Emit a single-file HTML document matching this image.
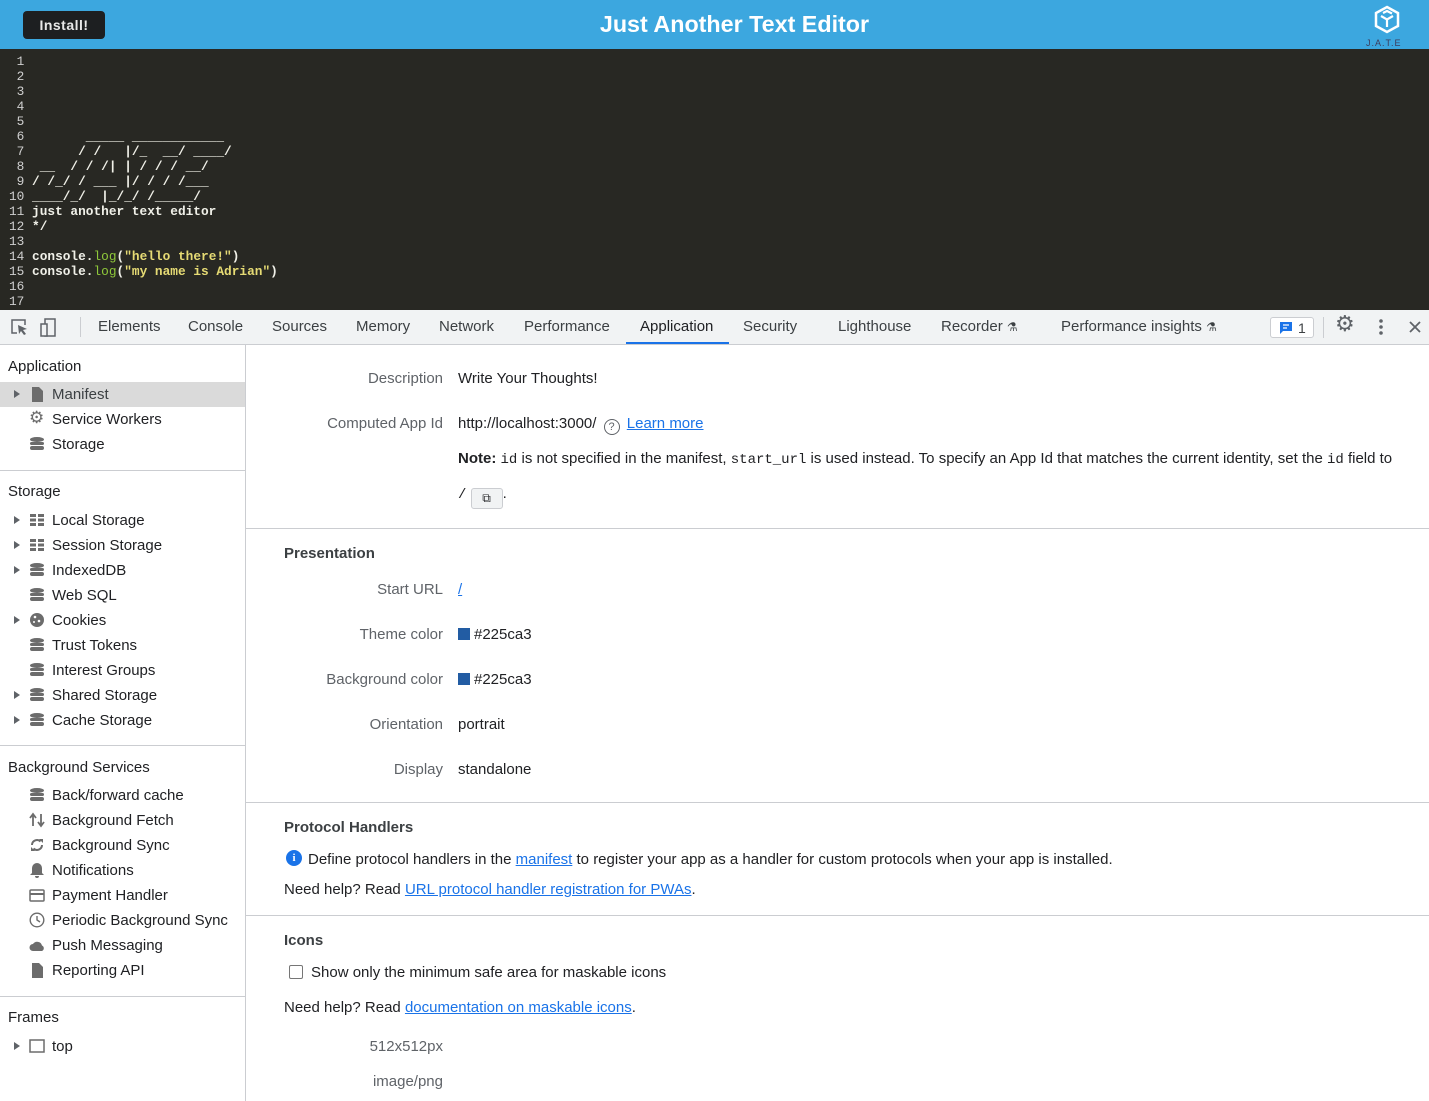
<!DOCTYPE html>
<html><head><meta charset="utf-8"><style>
*{margin:0;padding:0;box-sizing:border-box}
body{width:1429px;height:1101px;overflow:hidden;font-family:"Liberation Sans",sans-serif;background:#fff;position:relative;color:#202124;line-height:20px}
.a{position:absolute;white-space:nowrap}
#hdr{left:0;top:0;width:1429px;height:49px;background:#3ca7df}
#inst{left:23px;top:11px;width:82px;height:28px;background:#1d1f21;border-radius:4px;color:#e8e8e8;font-weight:bold;font-size:14px;line-height:28px;text-align:center;letter-spacing:.5px}
#title{left:0;width:1469px;top:10px;text-align:center;color:#fff;font-weight:bold;font-size:23.3px;line-height:28px}
#ed{left:0;top:49px;width:1429px;height:261px;background:#282823}
pre{position:absolute;left:9px;top:54px;font-family:"Liberation Mono",monospace;font-size:12.8px;line-height:15px;color:#f0f0e8;font-weight:bold}
.g{color:#8fc93a;font-weight:normal}.y{color:#e6db74}.n{color:#cfcfcf;font-weight:normal}
#tb{left:0;top:310px;width:1429px;height:35px;background:#f1f3f4;border-bottom:1px solid #cbcdd1}
.tab{top:317px;font-size:15px;color:#3c4043}
#side{left:0;top:345px;width:246px;height:756px;border-right:1px solid #cbcdd1}
.h{font-size:15px;color:#202124;left:8px}
.it{left:52px;font-size:15px;color:#202124}
.ic{left:29px;width:16px;height:16px}
.tri{left:14px;width:0;height:0;border-left:6px solid #5f6368;border-top:4px solid transparent;border-bottom:4px solid transparent}
.hr{height:1px;background:#cbcdd1}
.lb{font-size:15px;color:#5f6368;right:986px;text-align:right}
.v{left:458px;font-size:15px;color:#202124}
.sec{left:284px;font-size:15px;font-weight:bold;color:#3c4043}
a{color:#1a73e8}
code{font-family:"Liberation Mono",monospace;font-size:14px}
</style></head><body>
<div class="a" id="hdr"></div>
<div class="a" id="inst">Install!</div>
<div class="a" id="title">Just Another Text Editor</div>
<svg class="a" style="left:1373px;top:5px" width="28" height="30" viewBox="0 0 28 30"><path d="M14 2 L25 8 V21 L14 27 L3 21 V8 Z" fill="none" stroke="#fff" stroke-width="2.5"/><path d="M8 11 L14 14.5 L20 11 M14 14.5 V22 M10 8 L14 6 L19 8.5" fill="none" stroke="#fff" stroke-width="2.2"/></svg>
<div class="a" style="left:1366px;top:37px;font-size:9px;line-height:12px;color:#3d3d5c;letter-spacing:1px">J.A.T.E</div>
<div class="a" id="ed"></div>
<pre><span class="n"> 1</span>
<span class="n"> 2</span>
<span class="n"> 3</span>
<span class="n"> 4</span>
<span class="n"> 5</span>
<span class="n"> 6</span>        _____ ____________
<span class="n"> 7</span>       / /   |/_  __/ ____/
<span class="n"> 8</span>  __  / / /| | / / / __/
<span class="n"> 9</span> / /_/ / ___ |/ / / /___
<span class="n">10</span> ____/_/  |_/_/ /_____/
<span class="n">11</span> just another text editor
<span class="n">12</span> */
<span class="n">13</span>
<span class="n">14</span> console.<span class="g">log</span>(<span class="y">"hello there!"</span>)
<span class="n">15</span> console.<span class="g">log</span>(<span class="y">"my name is Adrian"</span>)
<span class="n">16</span>
<span class="n">17</span></pre>
<div class="a" id="tb"></div>
<svg class="a" style="left:10px;top:318px" width="54" height="20" viewBox="0 0 54 20"><path d="M7 15H2V2h13v5" fill="none" stroke="#5f6368" stroke-width="1.5"/><path d="M8 7l9 4-4 1 3 4-2 1-3-4-2 3z" fill="#5f6368"/><rect x="35" y="1" width="10" height="17" fill="none" stroke="#5f6368" stroke-width="1.5"/><rect x="31" y="6" width="6" height="12" fill="#f1f3f4" stroke="#5f6368" stroke-width="1.5"/></svg>
<div class="a" style="left:80px;top:317px;width:1px;height:20px;background:#cbcdd1"></div>
<div class="a tab" style="left:98px">Elements</div>
<div class="a tab" style="left:188px">Console</div>
<div class="a tab" style="left:272px">Sources</div>
<div class="a tab" style="left:356px">Memory</div>
<div class="a tab" style="left:439px">Network</div>
<div class="a tab" style="left:524px">Performance</div>
<div class="a tab" style="left:640px;color:#202124">Application</div>
<div class="a" style="left:626px;top:342px;width:103px;height:2px;background:#1a73e8"></div>
<div class="a tab" style="left:743px">Security</div>
<div class="a tab" style="left:838px">Lighthouse</div>
<div class="a tab" style="left:941px">Recorder <span style="font-size:12px">⚗</span></div>
<div class="a tab" style="left:1061px">Performance insights <span style="font-size:12px">⚗</span></div>
<div class="a" style="left:1270px;top:317px;width:44px;height:21px;border:1px solid #cbcdd1;border-radius:3px;background:#fff"></div>
<svg class="a" style="left:1278px;top:320px" width="16" height="16" viewBox="0 0 16 16"><path d="M2 2h12v9H5l-3 3z" fill="#1a73e8"/><path d="M5 5h6M5 8h4" stroke="#fff" stroke-width="1.3"/></svg>
<div class="a" style="left:1298px;top:318px;font-size:14px;color:#3c4043">1</div>
<div class="a" style="left:1323px;top:317px;width:1px;height:21px;background:#cbcdd1"></div>
<div class="a" style="left:1335px;top:314px;font-size:22px;color:#5f6368">⚙</div>
<svg class="a" style="left:1377px;top:318px" width="8" height="18"><circle cx="4" cy="3" r="1.8" fill="#5f6368"/><circle cx="4" cy="9" r="1.8" fill="#5f6368"/><circle cx="4" cy="15" r="1.8" fill="#5f6368"/></svg>
<svg class="a" style="left:1408px;top:320px" width="14" height="14"><path d="M2 2l10 10M12 2L2 12" stroke="#5f6368" stroke-width="1.8"/></svg>

<div class="a" id="side"></div>
<div class="a h" style="top:357px">Application</div>
<div class="a" style="left:0;top:382px;width:245px;height:25px;background:#dadada"></div>
<div class="a tri" style="top:390px"></div>
<svg class="a ic" style="top:386px" viewBox="0 0 16 16"><path d="M3 1h7l4 4v11H3z" fill="#6c6c6c"/></svg>
<div class="a it" style="top:385px;color:#3c4043">Manifest</div>
<div class="a ic" style="top:408px;font-size:17px;color:#6c6c6c">⚙</div><div class="a it" style="top:410px">Service Workers</div>
<svg class="a ic" style="top:436px" viewBox="0 0 16 16"><g fill="#6c6c6c"><ellipse cx="8" cy="3.5" rx="7" ry="2.5"/><rect x="1" y="6" width="14" height="3" rx="1.5"/><rect x="1" y="10" width="14" height="4" rx="2"/></g></svg><div class="a it" style="top:435px">Storage</div>
<div class="a hr" style="left:0;top:470px;width:245px"></div>
<div class="a h" style="top:482px">Storage</div>
<div class="a tri" style="top:516px"></div><svg class="a ic" style="top:512px" viewBox="0 0 16 16"><g fill="#6c6c6c"><rect x="1" y="2" width="6" height="3"/><rect x="9" y="2" width="6" height="3"/><rect x="1" y="6.5" width="6" height="3"/><rect x="9" y="6.5" width="6" height="3"/><rect x="1" y="11" width="6" height="3"/><rect x="9" y="11" width="6" height="3"/></g></svg><div class="a it" style="top:511px">Local Storage</div>
<div class="a tri" style="top:541px"></div><svg class="a ic" style="top:537px" viewBox="0 0 16 16"><g fill="#6c6c6c"><rect x="1" y="2" width="6" height="3"/><rect x="9" y="2" width="6" height="3"/><rect x="1" y="6.5" width="6" height="3"/><rect x="9" y="6.5" width="6" height="3"/><rect x="1" y="11" width="6" height="3"/><rect x="9" y="11" width="6" height="3"/></g></svg><div class="a it" style="top:536px">Session Storage</div>
<div class="a tri" style="top:566px"></div><svg class="a ic" style="top:562px" viewBox="0 0 16 16"><g fill="#6c6c6c"><ellipse cx="8" cy="3.5" rx="7" ry="2.5"/><rect x="1" y="6" width="14" height="3" rx="1.5"/><rect x="1" y="10" width="14" height="4" rx="2"/></g></svg><div class="a it" style="top:561px">IndexedDB</div>
<svg class="a ic" style="top:587px" viewBox="0 0 16 16"><g fill="#6c6c6c"><ellipse cx="8" cy="3.5" rx="7" ry="2.5"/><rect x="1" y="6" width="14" height="3" rx="1.5"/><rect x="1" y="10" width="14" height="4" rx="2"/></g></svg><div class="a it" style="top:586px">Web SQL</div>
<div class="a tri" style="top:616px"></div><svg class="a ic" style="top:612px" viewBox="0 0 16 16"><circle cx="8" cy="8" r="7" fill="#6c6c6c"/><g fill="#fff"><circle cx="6" cy="5" r="1.3"/><circle cx="10" cy="9" r="1.3"/><circle cx="5" cy="10" r="1"/></g></svg><div class="a it" style="top:611px">Cookies</div>
<svg class="a ic" style="top:637px" viewBox="0 0 16 16"><g fill="#6c6c6c"><ellipse cx="8" cy="3.5" rx="7" ry="2.5"/><rect x="1" y="6" width="14" height="3" rx="1.5"/><rect x="1" y="10" width="14" height="4" rx="2"/></g></svg><div class="a it" style="top:636px">Trust Tokens</div>
<svg class="a ic" style="top:662px" viewBox="0 0 16 16"><g fill="#6c6c6c"><ellipse cx="8" cy="3.5" rx="7" ry="2.5"/><rect x="1" y="6" width="14" height="3" rx="1.5"/><rect x="1" y="10" width="14" height="4" rx="2"/></g></svg><div class="a it" style="top:661px">Interest Groups</div>
<div class="a tri" style="top:691px"></div><svg class="a ic" style="top:687px" viewBox="0 0 16 16"><g fill="#6c6c6c"><ellipse cx="8" cy="3.5" rx="7" ry="2.5"/><rect x="1" y="6" width="14" height="3" rx="1.5"/><rect x="1" y="10" width="14" height="4" rx="2"/></g></svg><div class="a it" style="top:686px">Shared Storage</div>
<div class="a tri" style="top:716px"></div><svg class="a ic" style="top:712px" viewBox="0 0 16 16"><g fill="#6c6c6c"><ellipse cx="8" cy="3.5" rx="7" ry="2.5"/><rect x="1" y="6" width="14" height="3" rx="1.5"/><rect x="1" y="10" width="14" height="4" rx="2"/></g></svg><div class="a it" style="top:711px">Cache Storage</div>
<div class="a hr" style="left:0;top:745px;width:245px"></div>
<div class="a h" style="top:758px">Background Services</div>
<svg class="a ic" style="top:787px" viewBox="0 0 16 16"><g fill="#6c6c6c"><ellipse cx="8" cy="3.5" rx="7" ry="2.5"/><rect x="1" y="6" width="14" height="3" rx="1.5"/><rect x="1" y="10" width="14" height="4" rx="2"/></g></svg><div class="a it" style="top:786px">Back/forward cache</div>
<svg class="a ic" style="top:812px" viewBox="0 0 16 16"><path d="M4 14V3M1 6l3-4 3 4M12 2v11M9 10l3 4 3-4" fill="none" stroke="#6c6c6c" stroke-width="1.8"/></svg><div class="a it" style="top:811px">Background Fetch</div>
<svg class="a ic" style="top:837px" viewBox="0 0 16 16"><path d="M3 8a5 5 0 0 1 8.5-3.5M13 8a5 5 0 0 1-8.5 3.5" fill="none" stroke="#6c6c6c" stroke-width="2"/><path d="M10 2h4v4zM6 14H2v-4z" fill="#6c6c6c"/></svg><div class="a it" style="top:836px">Background Sync</div>
<svg class="a ic" style="top:862px" viewBox="0 0 16 16"><path d="M8 1a5 5 0 0 0-5 5v5l-2 2h14l-2-2V6a5 5 0 0 0-5-5zM6 14h4a2 2 0 0 1-4 0z" fill="#6c6c6c"/></svg><div class="a it" style="top:861px">Notifications</div>
<svg class="a ic" style="top:887px" viewBox="0 0 16 16"><rect x="1" y="3" width="14" height="11" rx="1" fill="none" stroke="#6c6c6c" stroke-width="1.5"/><rect x="1" y="6" width="14" height="2" fill="#6c6c6c"/></svg><div class="a it" style="top:886px">Payment Handler</div>
<svg class="a ic" style="top:912px" viewBox="0 0 16 16"><circle cx="8" cy="8" r="6.8" fill="none" stroke="#6c6c6c" stroke-width="1.4"/><path d="M8 4v4l3 2" fill="none" stroke="#6c6c6c" stroke-width="1.4"/></svg><div class="a it" style="top:911px">Periodic Background Sync</div>
<svg class="a ic" style="top:937px" viewBox="0 0 16 16"><path d="M4 14a3.5 3.5 0 0 1 0-7 5 5 0 0 1 9 1.5A3 3 0 0 1 13 14z" fill="#6c6c6c"/></svg><div class="a it" style="top:936px">Push Messaging</div>
<svg class="a ic" style="top:962px" viewBox="0 0 16 16"><path d="M3 1h7l4 4v11H3z" fill="#6c6c6c"/></svg><div class="a it" style="top:961px">Reporting API</div>
<div class="a hr" style="left:0;top:996px;width:245px"></div>
<div class="a h" style="top:1008px">Frames</div>
<div class="a tri" style="top:1042px"></div><svg class="a ic" style="top:1038px" viewBox="0 0 16 16"><rect x="1" y="2" width="14" height="12" fill="none" stroke="#6c6c6c" stroke-width="1.5"/></svg><div class="a it" style="top:1037px">top</div>

<div class="a lb" style="top:369px">Description</div><div class="a v" style="top:369px">Write Your Thoughts!</div>
<div class="a lb" style="top:414px">Computed App Id</div>
<div class="a v" style="top:414px">http://localhost:3000/ <span style="display:inline-block;width:16px;height:16px;border:1.3px solid #5f6368;border-radius:50%;font-size:11px;text-align:center;line-height:14px;color:#5f6368;margin:0 3px;vertical-align:-2px">?</span> <a href="#">Learn more</a></div>
<div class="a v" style="top:449px"><b>Note:</b> <code>id</code> is not specified in the manifest, <code>start_url</code> is used instead. To specify an App Id that matches the current identity, set the <code>id</code> field to</div>
<div class="a v" style="top:484px"><code>/</code> <span style="display:inline-block;width:32px;height:21px;border:1px solid #cbcdd1;border-radius:3px;background:#f1f3f4;vertical-align:-4px;text-align:center;font-size:12px;line-height:19px">⧉</span>.</div>
<div class="a hr" style="left:246px;top:528px;width:1183px"></div>
<div class="a sec" style="top:544px">Presentation</div>
<div class="a lb" style="top:580px">Start URL</div><div class="a v" style="top:580px"><a href="#">/</a></div>
<div class="a lb" style="top:625px">Theme color</div><div class="a v" style="top:625px"><span style="display:inline-block;width:12px;height:12px;background:#225ca3;vertical-align:-1px;margin-right:4px"></span>#225ca3</div>
<div class="a lb" style="top:670px">Background color</div><div class="a v" style="top:670px"><span style="display:inline-block;width:12px;height:12px;background:#225ca3;vertical-align:-1px;margin-right:4px"></span>#225ca3</div>
<div class="a lb" style="top:715px">Orientation</div><div class="a v" style="top:715px">portrait</div>
<div class="a lb" style="top:760px">Display</div><div class="a v" style="top:760px">standalone</div>
<div class="a hr" style="left:246px;top:802px;width:1183px"></div>
<div class="a sec" style="top:818px">Protocol Handlers</div>
<div class="a" style="left:286px;top:850px;width:16px;height:16px;border-radius:50%;background:#1a73e8;color:#fff;font-size:11px;font-weight:bold;text-align:center;line-height:16px;font-family:'Liberation Serif',serif">i</div>
<div class="a" style="left:308px;top:850px;font-size:15px">Define protocol handlers in the <a href="#">manifest</a> to register your app as a handler for custom protocols when your app is installed.</div>
<div class="a" style="left:284px;top:880px;font-size:15px">Need help? Read <a href="#">URL protocol handler registration for PWAs</a>.</div>
<div class="a hr" style="left:246px;top:915px;width:1183px"></div>
<div class="a sec" style="top:931px">Icons</div>
<div class="a" style="left:289px;top:965px;width:14px;height:14px;border:1px solid #767676;border-radius:2px"></div>
<div class="a" style="left:311px;top:963px;font-size:15px">Show only the minimum safe area for maskable icons</div>
<div class="a" style="left:284px;top:998px;font-size:15px">Need help? Read <a href="#">documentation on maskable icons</a>.</div>
<div class="a lb" style="top:1037px">512x512px</div>
<div class="a lb" style="top:1072px">image/png</div>
</body></html>
